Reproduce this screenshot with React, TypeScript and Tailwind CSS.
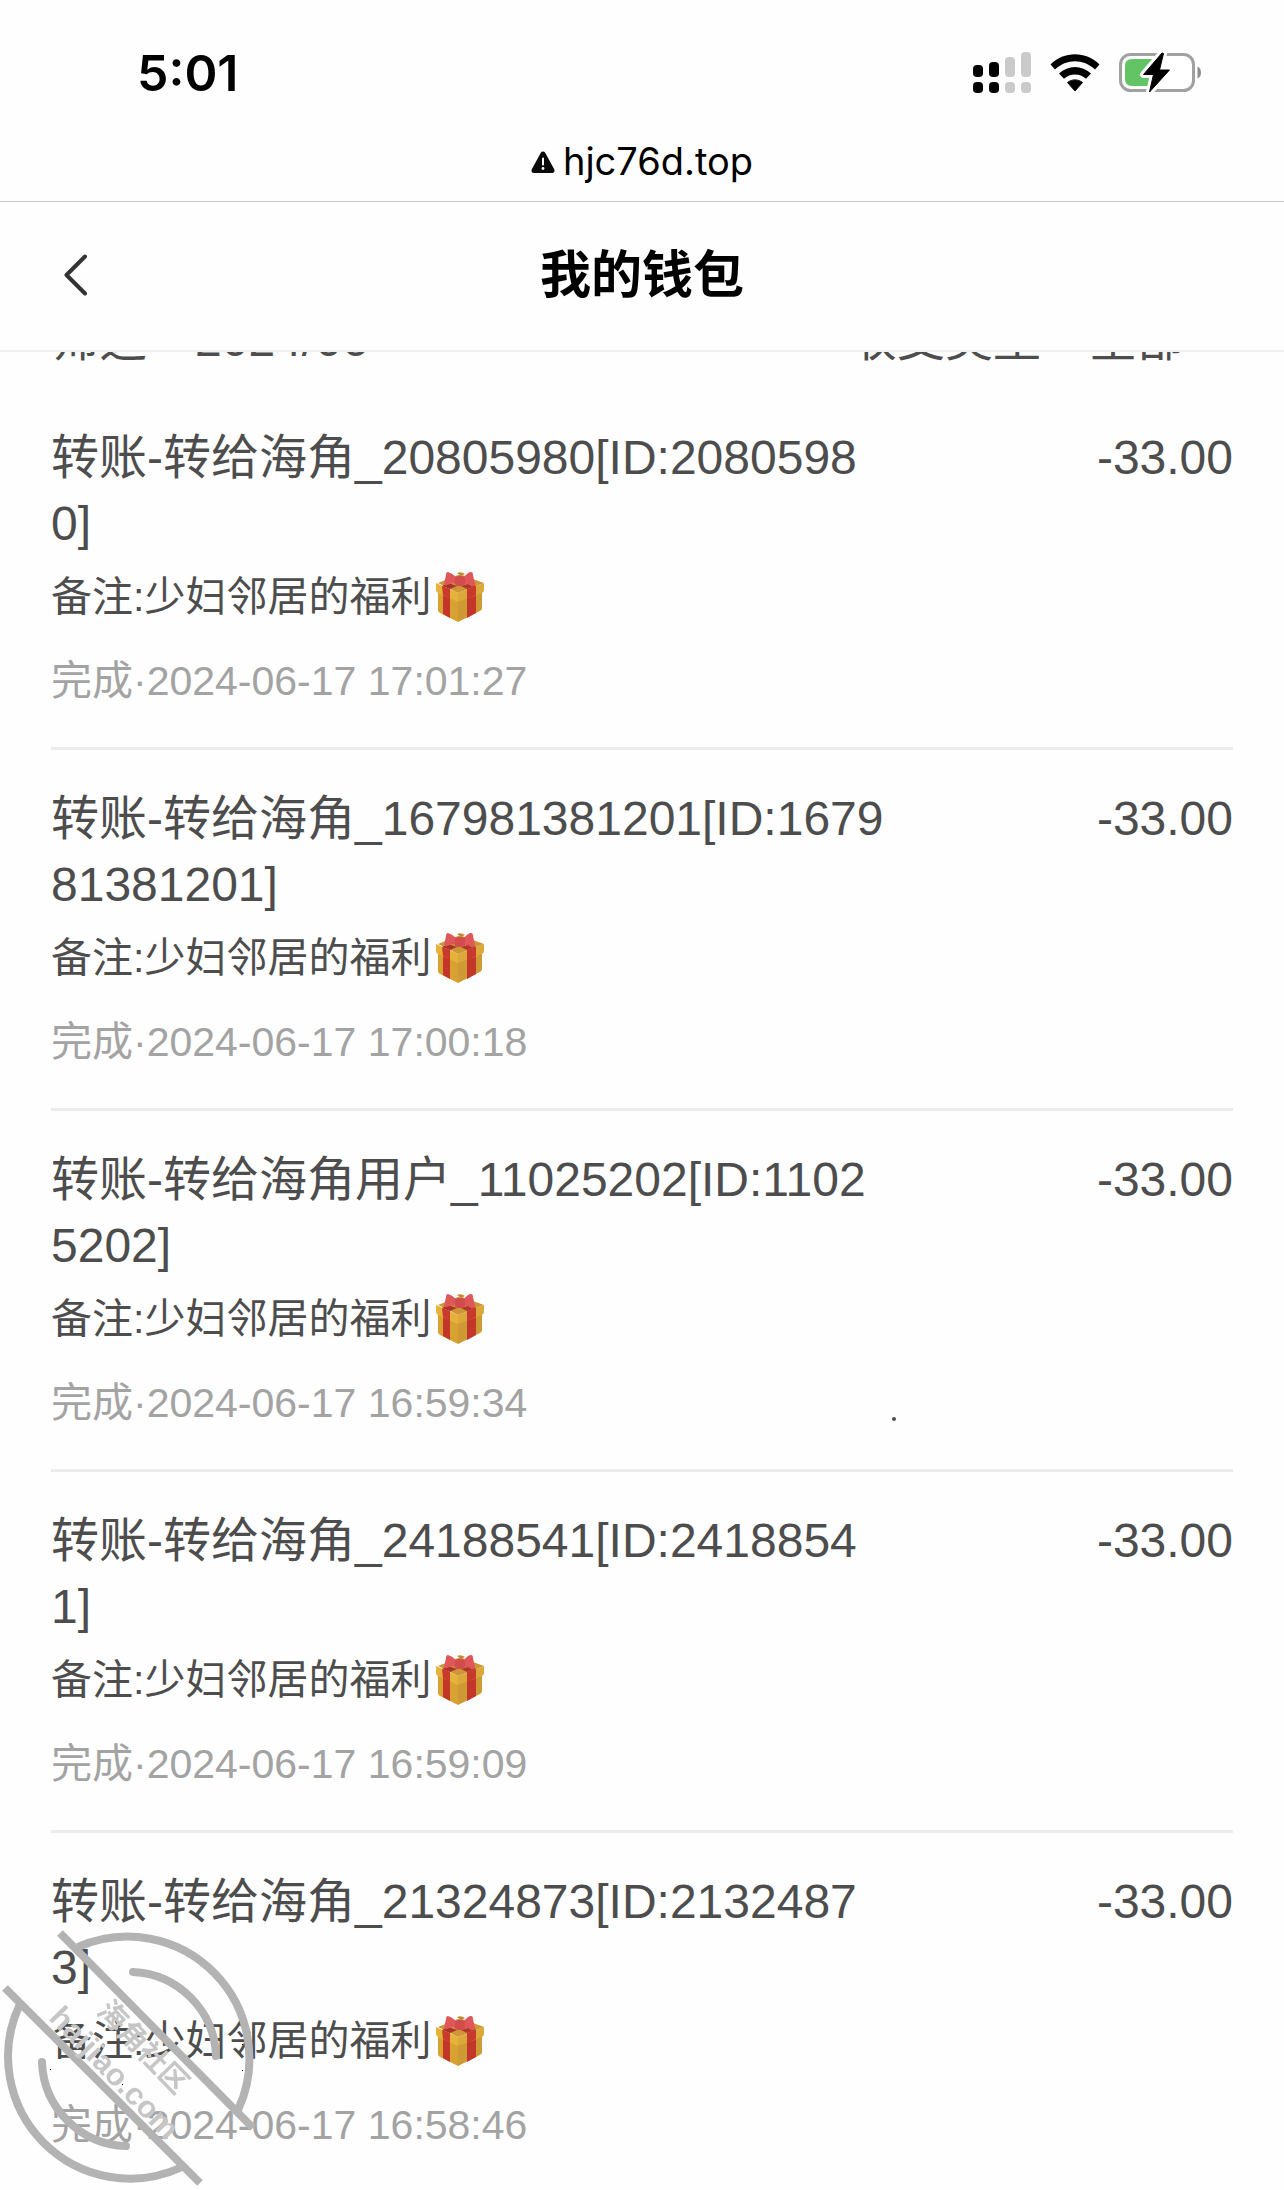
// Wallet history page: phone status bar, browser address, page header and the
// list of transfers for the selected month.

type Transfer = {
  title: string;
  note: string;
  amount: string;
  status: string;
  time: string;
};

const NOTE = "备注:少妇邻居的福利";

const transfers: Transfer[] = [
  { title: "转账-转给海角_20805980[ID:20805980]", note: NOTE, amount: "-33.00", status: "完成", time: "2024-06-17 17:01:27" },
  { title: "转账-转给海角_167981381201[ID:167981381201]", note: NOTE, amount: "-33.00", status: "完成", time: "2024-06-17 17:00:18" },
  { title: "转账-转给海角用户_11025202[ID:11025202]", note: NOTE, amount: "-33.00", status: "完成", time: "2024-06-17 16:59:34" },
  { title: "转账-转给海角_24188541[ID:24188541]", note: NOTE, amount: "-33.00", status: "完成", time: "2024-06-17 16:59:09" },
  { title: "转账-转给海角_21324873[ID:21324873]", note: NOTE, amount: "-33.00", status: "完成", time: "2024-06-17 16:58:46" },
];

function SignalIcon() {
  return (
    <svg width="58" height="42" viewBox="0 0 58 42" aria-hidden="true">
      <rect x="0" y="13" width="10" height="12" rx="4" fill="#000" />
      <rect x="16" y="10" width="10" height="15" rx="4" fill="#000" />
      <rect x="32" y="5" width="10" height="20" rx="4" fill="#cacaca" />
      <rect x="48" y="0" width="10" height="25" rx="4" fill="#cacaca" />
      <rect x="0" y="30" width="10" height="11" rx="4" fill="#000" />
      <rect x="16" y="30" width="10" height="11" rx="4" fill="#000" />
      <rect x="32" y="30" width="10" height="11" rx="4" fill="#cacaca" />
      <rect x="48" y="30" width="10" height="11" rx="4" fill="#cacaca" />
    </svg>
  );
}

function WifiIcon() {
  return (
    <svg width="50" height="38" viewBox="0 0 50 38" aria-hidden="true">
      <path d="M0.5 10.5C14 -3.2 36 -3.2 49.500 10.500L45 15.500C33.500 4.500 16.500 4.500 5 15.500Z" fill="#000" />
      <path d="M9 19.500C18 10.800 32 10.800 41 19.500L36 24.800C30 19 20 19 14 24.800Z" fill="#000" />
      <path d="M17.500 28.500C22 25 28 25 32.500 28.500L25 37Z" fill="#000" stroke="#000" strokeLinejoin="round" />
    </svg>
  );
}

function BatteryIcon() {
  return (
    <svg width="83" height="42" viewBox="0 0 83 42" aria-hidden="true">
      <rect x="1.500" y="2.500" width="73" height="36" rx="10" fill="#fff" stroke="#a1a1a1" strokeWidth="3" />
      <path d="M13 7H36V34H13Q6 34 6 27V14Q6 7 13 7Z" fill="#63c466" />
      <path d="M78.500 14.500Q82 16 82 20.500Q82 25 78.500 26.500Z" fill="#8e8e8e" />
      <path
        d="M43 1L24.500 22.500H34.500L30.500 40L50.500 18H40.500L44.500 1.500Z"
        fill="#000"
        stroke="#fff"
        strokeWidth="7"
        strokeLinejoin="round"
      />
      <path d="M43 1L24.500 22.500H34.500L30.500 40L50.500 18H40.500L44.500 1.500Z" fill="#000" stroke="#000" strokeLinejoin="round" />
    </svg>
  );
}

function WarningIcon() {
  return (
    <svg width="24" height="23" viewBox="0 0 24 23" aria-hidden="true">
      <path d="M12 3L21 19.500H3Z" fill="#0a0a0a" stroke="#0a0a0a" strokeWidth="5" strokeLinejoin="round" />
      <path d="M12 7.500V13.500" stroke="#fff" strokeWidth="2" strokeLinecap="round" />
      <circle cx="12" cy="17.500" r="1.400" fill="#fff" />
    </svg>
  );
}

function GiftIcon() {
  return (
    <svg className="shrink-0" width="52" height="52" viewBox="0 0 52 52" role="img" aria-label="礼物">
      <path d="M4 16L24 26V51L6 42Q4 41 4 39Z" fill="#d8a233" />
      <path d="M24 26L48 16V37Q48 39 46 40L24 51Z" fill="#cd9a33" />
      <path d="M9 18L16 22V47L9 43Z" fill="#c33429" />
      <path d="M33 22L42 18V42L33 47Z" fill="#c2362b" />
      <path d="M2 12L24 22V31L4 22Q2 21 2 19Z" fill="#e6b23a" />
      <path d="M24 22L50 12V19Q50 21 48 22L24 31Z" fill="#dba93a" />
      <path d="M4 12L24 4Q26 3 28 4L50 12L24 22Z" fill="#cf9636" />
      <path d="M8 15L16 18V28L9 24Z" fill="#cb392d" />
      <path d="M33 18L42 15V24L33 28Z" fill="#c8382d" />
      <path d="M8 15L14 12L23 15L16 18Z" fill="#a83429" />
      <path d="M42 15L37 12L27 15L33 18Z" fill="#b1372b" />
      <path d="M23 2Q27 0 31 3L27 5Z" fill="#c08a35" />
      <path d="M22 6Q18 2 14 1Q12 1 12 4L10 13Q11 15 13 14Q18 11 22 13Z" fill="#e0575a" />
      <path d="M30 6Q34 1 37 1Q39 1 39 4L41 13Q40 16 37 15Q33 12 30 13Z" fill="#e0575a" />
      <rect x="21" y="5" width="10" height="10" rx="3" fill="#d24c4e" />
    </svg>
  );
}

function Watermark() {
  return (
    <svg
      className="pointer-events-none fixed bottom-0 left-0"
      width="260"
      height="260"
      viewBox="0 0 260 260"
      aria-hidden="true"
    >
      <g fill="none" stroke="#b3b3b3" strokeWidth="8">
        <path d="M60 3L253 198" />
        <path d="M5 58L200 253" />
        <path d="M78 17A122 122 0 0 1 238 180" />
        <path d="M20 74A122 122 0 0 0 182 237" />
        <path d="M133 42A87 87 0 0 1 216 126" strokeLinecap="round" />
        <path d="M42 132A87 87 0 0 0 126 216" strokeLinecap="round" />
      </g>
      <g
        className="font-['Liberation_Sans','Noto_Sans_CJK_SC',sans-serif] font-bold"
        fill="#c6c6c6"
        textAnchor="middle"
      >
        <text transform="translate(136 124) rotate(46)" fontSize="29">海角社区</text>
        <text transform="translate(107 150) rotate(46)" fontSize="31">haijiao.com</text>
      </g>
      <g fill="#000">
        <rect x="50" y="139" width="1" height="1" />
        <rect x="122" y="154" width="1" height="1" />
        <rect x="242" y="114" width="1" height="1" />
        <rect x="242" y="140" width="1" height="1" />
      </g>
    </svg>
  );
}

function StatusBar() {
  return (
    <div className="flex h-36 items-center justify-between pt-px pr-[82px] pl-[137px]">
      <time className="font-[Inter,sans-serif] text-[50px] leading-none font-semibold">5:01</time>
      <div className="flex items-center gap-[19px]">
        <SignalIcon />
        <WifiIcon />
        <BatteryIcon />
      </div>
    </div>
  );
}

function TransferRow({ item }: { item: Transfer }) {
  return (
    <li className="border-b-3 border-[#ececec] pt-9 pb-[30px] last:border-b-0">
      <div className="flex items-start justify-between text-[48px] leading-[66px]">
        <h2 className="w-[71%] break-all">{item.title}</h2>
        <span>{item.amount}</span>
      </div>
      <p className="mt-1 flex items-center gap-[3px] text-[41px] leading-[72px]">
        {item.note}
        <GiftIcon />
      </p>
      <p className="mt-3 text-[41px] leading-[72px] text-[#a3a3a3]">
        {item.status}·{item.time}
      </p>
    </li>
  );
}

export default function App() {
  return (
    <div className="relative h-screen overflow-hidden bg-[#fefefe] font-['Liberation_Sans','Noto_Sans_CJK_SC',sans-serif] text-[#4d4d4d]">
      <header className="text-black">
        <StatusBar />
        <div className="flex h-[58px] items-start justify-center gap-2 border-b border-[#c8c8c8]">
          <span className="flex h-9 items-center">
            <WarningIcon />
          </span>
          <span className="font-[Inter,sans-serif] text-[38px] leading-[34px]">hjc76d.top</span>
        </div>
        <div className="grid h-[150px] grid-cols-[1fr_auto_1fr] items-center border-b-2 border-[#f0f0f0] px-13">
          <button type="button" aria-label="返回" className="flex h-13 w-12 items-start justify-center">
            <svg width="24" height="42" viewBox="0 0 24 42" fill="none" aria-hidden="true" className="mt-1">
              <path d="M21 2.500L2.500 21L21 39.500" stroke="#333" strokeWidth="4" strokeLinecap="round" strokeLinejoin="round" />
            </svg>
          </button>
          <h1 className="text-[51px] leading-[52px] font-bold">我的钱包</h1>
        </div>
      </header>

      <main className="px-[51px]">
        {/* Filters, mostly scrolled away under the header */}
        <div className="flex h-[37px] items-end justify-between overflow-hidden pr-12 pb-4 text-[48px] leading-[66px]">
          <div className="flex gap-12">
            <span>筛选</span>
            <button type="button">2024/06</button>
          </div>
          <div className="flex gap-12">
            <span>收支类型</span>
            <button type="button">全部</button>
          </div>
        </div>
        <ul>
          {transfers.map((item) => (
            <TransferRow key={item.time} item={item} />
          ))}
        </ul>
      </main>

      {/* Stray speck over the list */}
      <span className="absolute top-[1417px] left-[892px] size-1 rounded-full bg-[#4d4d4d]" />
      <Watermark />
    </div>
  );
}
